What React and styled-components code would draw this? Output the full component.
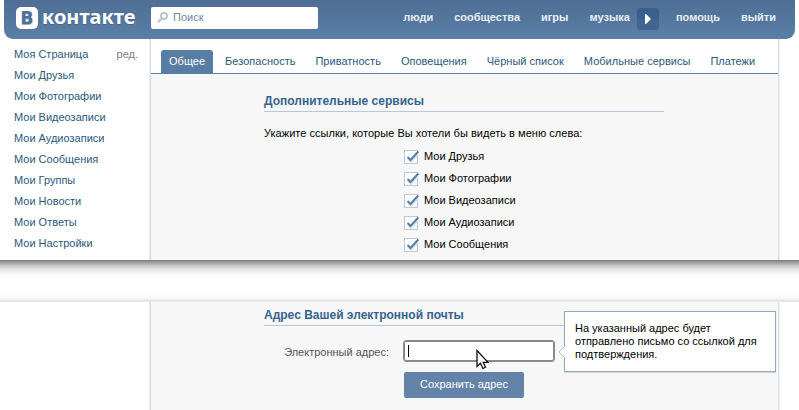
import React from "react";
import styled, { createGlobalStyle } from "styled-components";

const GlobalStyle = createGlobalStyle`
  * { box-sizing: border-box; }
  body {
    margin: 0;
    background: #fff;
    color: #000;
    font: 11px/13px "Liberation Sans", Arial, sans-serif;
    overflow: hidden;
  }
`;

const Page = styled.div`
  width: 799px;
  height: 410px;
  display: flex;
  flex-direction: column;
`;

const TopFragment = styled.div`
  height: 260px;
  overflow: hidden;
`;

const Header = styled.header`
  display: flex;
  height: 39px;
  margin: 0 4px;
  padding: 7px 19px 0 12px;
  border-radius: 0 0 9px 9px;
  background: linear-gradient(#4e6e95, #5b7fa7);
`;

const Logo = styled.div`
  display: flex;
  width: 135px;
`;

const LogoMark = styled.span`
  width: 22px;
  height: 22px;
  border-radius: 5px;
  background: #fff;
  color: #4d6f98;
  font: bold 17px/22px "DejaVu Sans", sans-serif;
  text-align: center;
  text-shadow: 0 1px 1px #8fa5be;
`;

const LogoText = styled.span`
  margin-left: 4px;
  color: #fff;
  font: bold 20px/20px "Noto Sans", sans-serif;
  white-space: nowrap;
  text-shadow: 0 1px 1px #45658c;
`;

const Search = styled.div`
  display: flex;
  width: 167px;
  height: 22px;
  border-radius: 2px;
  background: #fff;
  color: #6d8ba5;
  padding: 4px 6px;
  line-height: 13px;
`;

const SearchIcon = styled.svg`
  width: 11px;
  height: 12px;
  margin: 1px 5px 0 0;
`;

const Nav = styled.nav`
  display: flex;
  margin-left: auto;
  color: #e8eff6;
  font-weight: bold;
  line-height: 20px;
`;

const NavItem = styled.span`
  margin-left: ${(p) => p.$gap ?? 21}px;
`;

const PlayButton = styled.span`
  display: flex;
  align-items: center;
  justify-content: center;
  width: 22px;
  height: 22px;
  margin: 1px 0 0 7px;
  border-radius: 3px;
  background: linear-gradient(#3a5f8e 50%, #426590 50%);
`;

const Columns = styled.div`
  display: flex;
  height: ${(p) => p.$height}px;
`;

const Sidebar = styled.aside`
  width: 149px;
  padding: 5px 11px 0 14px;
`;

const MenuItem = styled.div`
  display: flex;
  justify-content: space-between;
  height: 21px;
  line-height: 20px;
  color: #2b587a;
`;

const EditLink = styled.span`
  color: #808080;
`;

const Main = styled.main`
  width: 631px;
  border: solid #dae1e8;
  border-width: 0 2px;
  border-image: linear-gradient(to right, #e9edf2 0 1px, #d5dce5 1px 2px, #d9e0e9 2px 630px, #edf0f4 630px) 2;
  background: #f7f7f7;
`;

const Tabs = styled.div`
  display: flex;
  gap: 4px;
  height: 35px;
  padding: 11px 10px 0;
  border-bottom: 1px solid #5b7fa5;
  background: #fff;
`;

const Tab = styled.span`
  height: 23px;
  padding: 0 8px;
  border-radius: 3px 3px 0 0;
  line-height: 22px;
  letter-spacing: 0.015px;
  white-space: nowrap;
  color: ${(p) => (p.$active ? "#fff" : "#2b587a")};
  background: ${(p) => (p.$active ? "#587da4" : "transparent")};
`;

const Section = styled.section`
  width: 400px;
  margin-left: 113px;
  padding-top: ${(p) => p.$top}px;
`;

const Heading = styled.h4`
  height: 18px;
  margin: 0;
  border-bottom: 1px solid #b8c7d9;
  color: #36638e;
  font-size: 12px;
  line-height: 14px;
`;

const Description = styled.div`
  margin-top: 15px;
  line-height: 13px;
  letter-spacing: 0.03px;
`;

const CheckList = styled.div`
  margin: 6px 0 0 140px;
`;

const CheckRow = styled.label`
  display: flex;
  align-items: flex-start;
  height: 22px;
  padding-top: 3px;
  line-height: 14px;
`;

const CheckIcon = styled.svg`
  width: 16px;
  height: 16px;
  margin-right: 4px;
`;

const Divider = styled.div`
  height: 42px;
  background:
    linear-gradient(#777b7b 0, #999 2px, #bdbdbd 5px, #e3e3e3 9px, #f7f7f7 14px, #fff 19px, #fff 34px, #f5f5f5 39px, #e1e1e1 41px, #ececec 42px);
`;

const FormRow = styled.div`
  display: flex;
  position: relative;
  margin-top: 14px;
`;

const FieldLabel = styled.span`
  width: 139px;
  padding: 6px 14px 0 0;
  text-align: right;
  color: #555;
`;

const Field = styled.div`
  width: 152px;
  height: 22px;
  border: 1px solid #8c8c90;
  border-radius: 3px;
  box-shadow: inset 0 0 0 1px #85858a;
  background: #fff;
  padding: 4px;
`;

const Caret = styled.span`
  display: block;
  width: 1px;
  height: 12px;
  background: #000;
`;

const SaveButton = styled.button`
  display: block;
  width: 120px;
  height: 26px;
  margin: 10px 0 0 140px;
  padding: 0 0 2px;
  border: 0;
  border-radius: 2px;
  background: #6383a8;
  color: #fff;
  font: 11px "Liberation Sans", Arial, sans-serif;
`;

const Tooltip = styled.div`
  position: absolute;
  left: 300px;
  top: -29px;
  width: 212px;
  height: 61px;
  padding: 10px;
  border: 1px solid #91a8c1;
  background: #fff;
  box-shadow: 0 1px 1px #d5d9de;
  white-space: nowrap;
`;

const TooltipArrow = styled.svg`
  position: absolute;
  left: -7px;
  top: 34px;
`;

const Cursor = styled.svg`
  position: absolute;
  left: 212px;
  top: 9px;
`;

const MENU = ["Моя Страница", "Мои Друзья", "Мои Фотографии", "Мои Видеозаписи", "Мои Аудиозаписи", "Мои Сообщения", "Мои Группы", "Мои Новости", "Мои Ответы", "Мои Настройки"];
const TABS = ["Общее", "Безопасность", "Приватность", "Оповещения", "Чёрный список", "Мобильные сервисы", "Платежи"];
const SERVICES = ["Мои Друзья", "Мои Фотографии", "Мои Видеозаписи", "Мои Аудиозаписи", "Мои Сообщения"];

function CheckedBox() {
  return (
    <CheckIcon viewBox="0 0 16 16">
      <rect x="0.5" y="1.5" width="13" height="13" fill="#fff" stroke="#bdc7d8" />
      <path d="M4 10l3 3 7-8" fill="none" stroke="#d9e2ec" strokeWidth="2" />
      <path d="M3.5 8l3 3L14.3 2.5" fill="none" stroke="#5580a8" strokeWidth="2" />
    </CheckIcon>
  );
}

export default function App() {
  return (
    <Page>
      <GlobalStyle />
      <TopFragment>
        <Header>
          <Logo>
            <LogoMark>В</LogoMark>
            <LogoText>контакте</LogoText>
          </Logo>
          <Search>
            <SearchIcon viewBox="0 0 11 12">
              <circle cx="7" cy="4" r="3" fill="none" stroke="#bdc5ce" strokeWidth="2" />
              <path d="M4.6 6.6L1 10.2" stroke="#bdc5ce" strokeWidth="2.4" />
            </SearchIcon>
            Поиск
          </Search>
          <Nav>
            <NavItem>люди</NavItem>
            <NavItem>сообщества</NavItem>
            <NavItem>игры</NavItem>
            <NavItem>музыка</NavItem>
            <PlayButton>
              <svg width="8" height="12" viewBox="0 0 8 12">
                <path d="M1 1h1l5 5-5 5H1z" fill="#fff" />
              </svg>
            </PlayButton>
            <NavItem $gap={17}>помощь</NavItem>
            <NavItem>выйти</NavItem>
          </Nav>
        </Header>
        <Columns $height={221}>
          <Sidebar>
            {MENU.map((item, i) => (
              <MenuItem key={item}>
                {item}
                {i === 0 && <EditLink>ред.</EditLink>}
              </MenuItem>
            ))}
          </Sidebar>
          <Main>
            <Tabs>
              {TABS.map((tab, i) => (
                <Tab key={tab} $active={i === 0}>{tab}</Tab>
              ))}
            </Tabs>
            <Section $top={20}>
              <Heading>Дополнительные сервисы</Heading>
              <Description>Укажите ссылки, которые Вы хотели бы видеть в меню слева:</Description>
              <CheckList>
                {SERVICES.map((name) => (
                  <CheckRow key={name}>
                    <CheckedBox />
                    {name}
                  </CheckRow>
                ))}
              </CheckList>
            </Section>
          </Main>
        </Columns>
      </TopFragment>
      <Divider />
      <Columns $height={108}>
        <Sidebar />
        <Main>
          <Section $top={6}>
            <Heading>Адрес Вашей электронной почты</Heading>
            <FormRow>
              <FieldLabel>Электронный адрес:</FieldLabel>
              <Field><Caret /></Field>
              <Tooltip>
                На указанный адрес будет<br />
                отправлено письмо со ссылкой для<br />
                подтверждения.
                <TooltipArrow width="7" height="12" viewBox="0 0 7 12">
                  <path d="M7 0L1 6l6 6z" fill="#fff" />
                  <path d="M6.5 0.5L1 6l5.5 5.5" fill="none" stroke="#b8c4d0" />
                </TooltipArrow>
              </Tooltip>
              <Cursor width="14" height="21" viewBox="0 0 14 21">
                <path d="M1 1.5v16l3.5-3.2 2.4 5.2 2.6-1.2-2.3-5h4.8z" fill="#fff" stroke="#111" strokeWidth="1.3" />
              </Cursor>
            </FormRow>
            <SaveButton>Сохранить адрес</SaveButton>
          </Section>
        </Main>
      </Columns>
    </Page>
  );
}
